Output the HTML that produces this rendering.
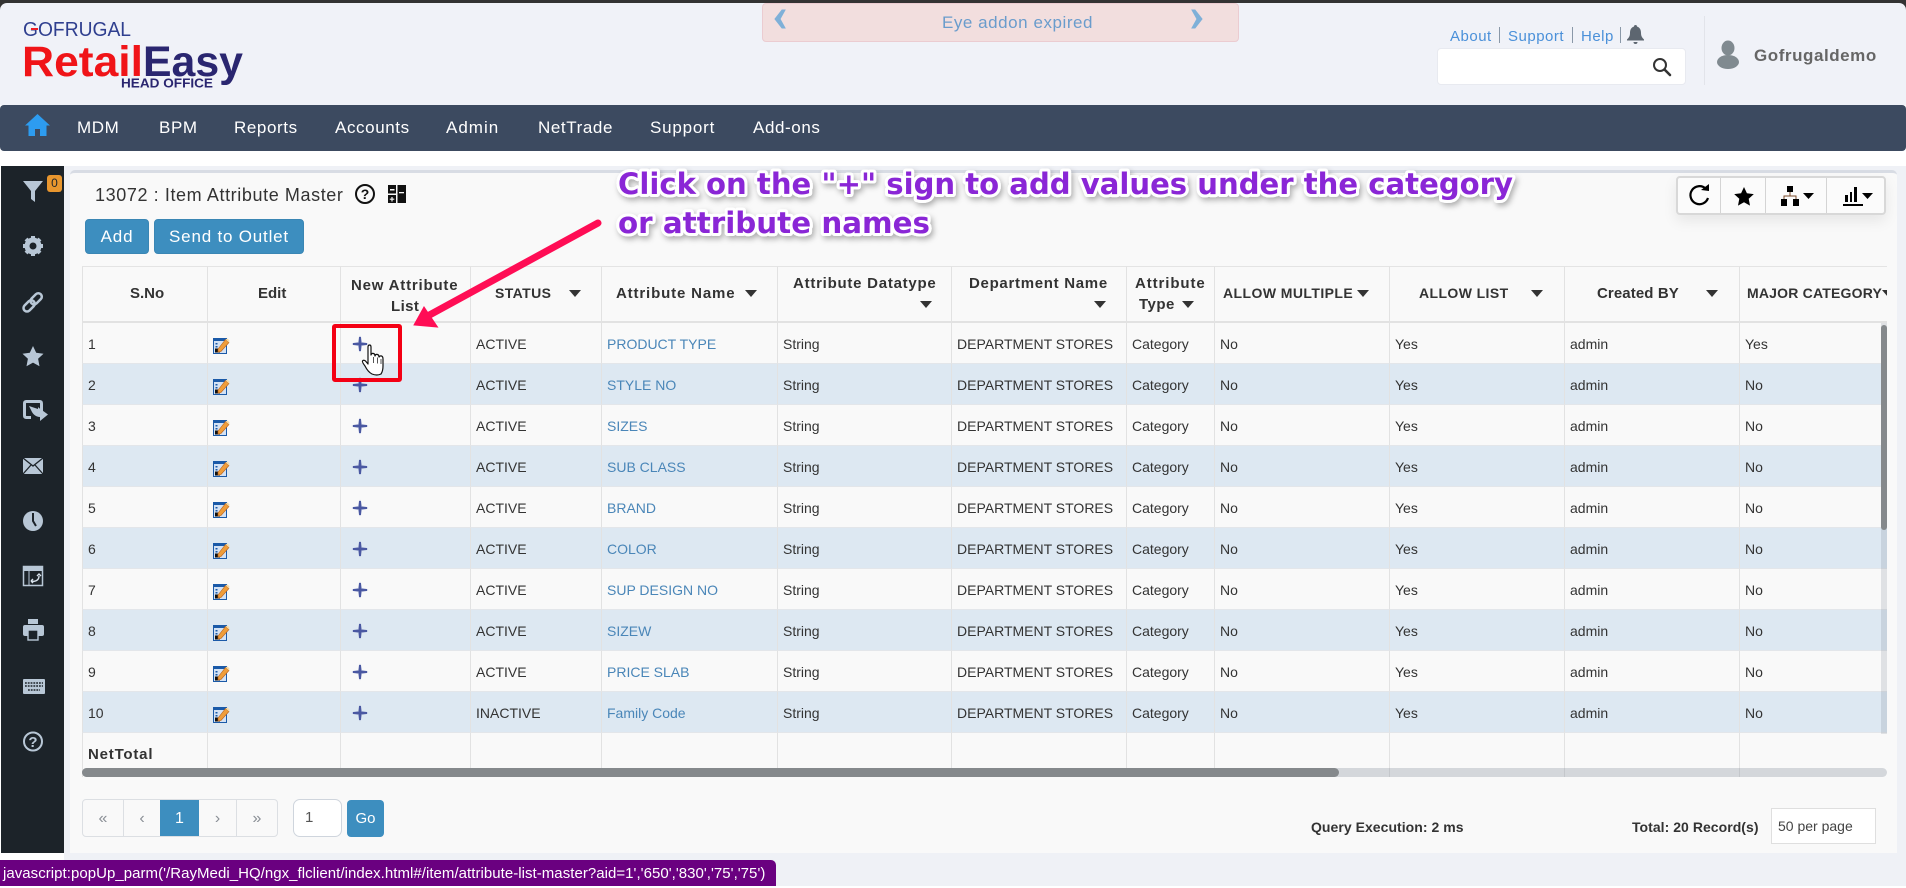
<!DOCTYPE html>
<html lang="en">
<head>
<meta charset="utf-8">
<title>13072 : Item Attribute Master</title>
<style>
*{box-sizing:border-box}
html,body{margin:0;padding:0;width:1906px;height:886px;overflow:hidden;background:#fff;font-family:"Liberation Sans",Arial,sans-serif;color:#333}
.a{position:absolute}
#strip{left:0;top:0;width:1906px;height:10px;background:#333}
#hdr{left:0;top:3px;width:1906px;height:102px;background:#f0f2f8;border-radius:7px 7px 0 0}
#alert{left:762px;top:3px;width:477px;height:39px;background:#f2dede;border:1px solid #ebccd1;border-radius:4px}
#alert span{position:absolute;left:0;right:0;top:9px;text-align:center;font-size:17px;letter-spacing:.55px;line-height:20px;color:#6a9ccc;padding-left:37px;padding-right:0;margin-left:-3px}
.tl{font-size:15px;letter-spacing:.5px;color:#4a90d9;top:28px;line-height:18px}
.sep{width:1px;height:16px;top:27px;background:#8a98a8}
#search{left:1437px;top:48px;width:249px;height:37px;background:#fff;border:1px solid #e8eaf0;border-radius:4px}
#udiv{left:1704px;top:16px;width:1px;height:69px;background:#e2e4ea}
#uname{left:1754px;top:46px;font-size:17px;font-weight:bold;letter-spacing:.55px;color:#666;line-height:20px}
#nav{left:0;top:105px;width:1906px;height:46px;background:#3c4a60;border-radius:4px}
.ni{top:12px;font-size:17px;letter-spacing:.6px;color:#fff;line-height:22px;white-space:nowrap}
#side{left:1px;top:166px;width:63px;height:687px;background:#1c2329}
#bg1{left:64px;top:166px;width:1842px;height:720px;background:#eff1f6}
#panel{left:70px;top:170px;width:1827px;height:683px;background:#f9f9f9;border-top:3px solid #d8dce4;border-radius:5px 5px 0 0}
#title{left:95px;top:184px;font-size:18px;letter-spacing:.6px;line-height:22px;color:#333;white-space:nowrap}
.btn{background:#3d8ebf;border:1px solid #3a86b4;border-radius:4px;color:#fff;font-size:17px;letter-spacing:.8px;line-height:33px;text-align:center;top:219px;height:35px}
#tools{left:1676px;top:176px;width:210px;height:39px;background:#fbfbfb;border:2px solid #d8d8d8;border-radius:4px;box-shadow:0 6px 14px rgba(0,0,0,.08)}
#tools i{position:absolute;top:0;bottom:0;width:1px;background:#d4d4d4}
#twrap{left:82px;top:266px;width:1805px;height:511px;overflow:hidden}
table{border-collapse:separate;border-spacing:0;table-layout:fixed;width:1805px;font-size:14px}
th,td{padding:0 0 0 5px;border-left:1px solid #e2e2e2;position:relative;text-align:left;white-space:nowrap;overflow:visible}
th{height:57px;border-top:1px solid #e4e4e4;border-bottom:2px solid #e2e2e2;font-weight:bold;color:#333;background:#f9f9f9}
th span{position:absolute;line-height:18px;white-space:nowrap}
th b{position:absolute;width:0;height:0;border-left:6px solid transparent;border-right:6px solid transparent;border-top:7px solid #333}
td{height:41px;border-bottom:1px solid #e3e6ea;vertical-align:middle;padding-top:2px}
tr.e td{background:#dde8f2}
tr.o td{background:#f9f9f9}
td.l{color:#4a86b8}
td svg{position:absolute}
tr.t td{height:44px;background:#f9f9f9;font-weight:bold;font-size:15px;letter-spacing:.8px;vertical-align:top;padding-top:13px;border-bottom:0}
#hbar{left:82px;top:768px;width:1805px;height:9px;background:rgba(120,130,145,.28);border-radius:5px}
#hthumb{left:82px;top:768px;width:1257px;height:9px;background:#85898c;border-radius:5px}
#vbar{left:1881px;top:323px;width:6px;height:411px;background:rgba(120,130,145,.2)}
#vthumb{left:1881px;top:325px;width:6px;height:205px;background:#85898c;border-radius:3px}
#pg{left:82px;top:799px;width:196px;height:38px;background:#f9f9f9;border:1px solid #dcdfe3;border-radius:4px}
#pg span{position:absolute;top:0;height:36px;line-height:38px;text-align:center;color:#8a8f96;font-size:16px}
#pg .act{background:#3d8ebf;color:#fff}
#pin{left:293px;top:799px;width:49px;height:38px;background:#fff;border:1px solid #cfd5dd;border-radius:7px;font-size:15px;line-height:36px;padding-left:11px;color:#555}
#go{left:347px;top:800px;width:37px;height:37px;background:#3d8ebf;border-radius:4px;color:#fff;font-size:15px;line-height:37px;text-align:center}
.ft{top:818px;font-size:14px;font-weight:bold;line-height:18px;color:#333;letter-spacing:.04px;white-space:nowrap}
#per{left:1771px;top:808px;width:105px;height:36px;background:#fff;border:1px solid #dfdfdf;font-size:14px;line-height:34px;padding-left:6px;color:#444}
#status{left:0;top:860px;width:776px;height:26px;background:#6a0080;border-radius:0 5px 0 0;color:#fff;font-size:15px;line-height:28px;padding-left:3px;white-space:nowrap;letter-spacing:.04px}
#overlay{left:0;top:0;width:1906px;height:886px;pointer-events:none}
</style>
</head>
<body>
<svg width="0" height="0" style="position:absolute">
<defs>
<symbol id="plus" viewBox="0 0 18 18">
<path d="M9 1L7.400 7.400 1 9 7.400 10.600 9 17 10.600 10.600 17 9 10.600 7.400Z" fill="#a4aed2" stroke="#a4aed2" stroke-width="1" opacity=".6"/>
<path d="M8 2h2l.4 5.600 5.600.4v2l-5.600.4L10 16H8l-.4-5.600L2 10V8l5.600-.4z" fill="#4a58a2"/>
</symbol>
<symbol id="edit" viewBox="0 0 17 17">
<rect x=".5" y="1.500" width="13" height="15" fill="#d4e2f4" stroke="#1b5aa8"/>
<rect x="1" y="2" width="12" height="2" fill="#1b5aa8"/>
<rect x="2.500" y="6" width="2" height="1.500" fill="#1b5aa8"/><rect x="2.500" y="9" width="2" height="1.500" fill="#1b5aa8"/>
<rect x="2" y="11.500" width="5" height="4" fill="#111"/>
<path d="M5 12L12.500 2.500 16 5.500 8 14.500 5 15Z" fill="#ef9d3a" stroke="#b9601a" stroke-width=".6"/>
<path d="M12.500 2.500L16 5.500 16.500 3.500 14.500 1.500Z" fill="#f7dca6"/>
</symbol>
</defs>
</svg>

<div class="a" id="strip"></div>
<div class="a" id="hdr"></div>

<svg class="a" style="left:0;top:0" width="270" height="100">
<text x="23" y="36" font-family="Liberation Sans" font-size="20" fill="#2f3f8f" textLength="108" lengthAdjust="spacingAndGlyphs">GOFRUGAL</text>
<rect x="31" y="28" width="7" height="2" fill="#ef1c24"/>
<text x="22" y="76" font-family="Liberation Sans" font-weight="bold" font-size="43" fill="#f01418" textLength="121" lengthAdjust="spacingAndGlyphs">Retail</text>
<text x="143" y="76" font-family="Liberation Sans" font-weight="bold" font-size="43" fill="#2a2670" textLength="100" lengthAdjust="spacingAndGlyphs">Easy</text>
<text x="121" y="87.500" font-family="Liberation Sans" font-weight="bold" font-size="13" fill="#2a2670" textLength="92" lengthAdjust="spacingAndGlyphs">HEAD OFFICE</text>
</svg>

<div class="a" id="alert"><span>Eye addon expired</span></div>
<svg class="a" style="left:770px;top:8px" width="20" height="22"><path d="M12 2L5 11l7 9h3L10 11l5-9z" fill="#7fb0d8" stroke="#7fb0d8"/></svg>
<svg class="a" style="left:1187px;top:8px" width="20" height="22"><path d="M8 2l7 9-7 9H5l5-9-5-9z" fill="#7fb0d8" stroke="#7fb0d8"/></svg>

<span class="a tl" style="left:1450px">About</span><div class="a sep" style="left:1499px"></div>
<span class="a tl" style="left:1508px">Support</span><div class="a sep" style="left:1572px"></div>
<span class="a tl" style="left:1581px">Help</span><div class="a sep" style="left:1620px"></div>
<svg class="a" style="left:1626px;top:24px" width="19" height="21"><path d="M9.500 1c1.200 0 1.500.8 1.500 1.500C14 3.500 15 6 15 9c0 3 1 4.500 3 6.500v1H1v-1C3 13.500 4 12 4 9c0-3 1-5.500 4-6.500C8 1.800 8.300 1 9.500 1z" fill="#5d6670"/><path d="M7.500 18a2 2 0 0 0 4 0z" fill="#5d6670"/></svg>
<div class="a" id="search"></div>
<svg class="a" style="left:1652px;top:57px" width="20" height="20"><circle cx="8" cy="8" r="6" fill="none" stroke="#333" stroke-width="2"/><path d="M12.500 12.500L18 18" stroke="#333" stroke-width="2.600" stroke-linecap="round"/></svg>
<div class="a" id="udiv"></div>
<svg class="a" style="left:1716px;top:40px" width="24" height="30"><ellipse cx="12" cy="8" rx="6.500" ry="7.500" fill="#808a90"/><ellipse cx="12" cy="22" rx="11" ry="7" fill="#808a90"/></svg>
<span class="a" id="uname">Gofrugaldemo</span>

<div class="a" id="nav">
<svg class="a" style="left:24px;top:8px" width="27" height="24"><path d="M13.500 1L1 12.500h3.500V23h6.500v-7h5v7h6.500V12.500H26z" fill="#2d9cf0"/></svg>
<span class="a ni" style="left:77px">MDM</span>
<span class="a ni" style="left:159px">BPM</span>
<span class="a ni" style="left:234px">Reports</span>
<span class="a ni" style="left:335px">Accounts</span>
<span class="a ni" style="left:446px;letter-spacing:1px">Admin</span>
<span class="a ni" style="left:538px">NetTrade</span>
<span class="a ni" style="left:650px;letter-spacing:.8px">Support</span>
<span class="a ni" style="left:753px">Add-ons</span>
</div>

<div class="a" id="bg1"></div>
<div class="a" id="side"></div>
<div class="a" id="panel"></div>

<svg class="a" style="left:0;top:166px" width="64" height="687">
<g fill="#b8c7d6">
<path d="M23 15h20l-8 10v11l-4 -3v-8z"/>
<circle cx="33" cy="80" r="6" fill="none" stroke="#b8c7d6" stroke-width="5"/>
<g stroke="#b8c7d6" stroke-width="4"><path d="M33 70v3M33 87v3M23 80h3M40 80h3M26 73l2 2M38 85l2 2M26 87l2-2M38 75l2-2"/></g>
<g fill="none" stroke="#b8c7d6" stroke-width="2.500" transform="rotate(-45 33 136)"><rect x="21" y="132.500" width="13" height="7" rx="3.500"/><rect x="31" y="132.500" width="13" height="7" rx="3.500"/></g>
<path d="M33 180l3.200 6.800 7.300.9-5.400 5.100 1.400 7.400-6.500-3.600-6.500 3.600 1.400-7.400-5.400-5.100 7.300-.9z"/>
<g transform="translate(0 -23)">
<path d="M27 257c-3 0-4 1-4 4v11c0 3 1 4 4 4h4v-3h-4c-1 0-1 0-1-1v-11c0-1 0-1 1-1h12c1 0 1 0 1 1v7h3v-7c0-3-1-4-4-4z"/>
<path d="M29 263l9 3v-2l1 1 9 6.500-8 6.500v-4c-4 0-7-3-8-5z"/>
</g>
<rect x="23" y="292" width="20" height="16"/>
<path d="M23 292l10 8 10-8M23 308l8-9M43 308l-8-9" fill="none" stroke="#1c2329" stroke-width="1.300"/>
<circle cx="33" cy="355" r="10"/>
<path d="M33 347v8l3 5" fill="none" stroke="#1c2329" stroke-width="2"/>
<rect x="23.500" y="400.500" width="19" height="19" fill="none" stroke="#b8c7d6" stroke-width="1.500"/>
<rect x="24" y="401" width="18" height="4"/>
<path d="M29 405v14" stroke="#b8c7d6"/>
<path d="M31 415c3 1 8 0 8-5M37 410l2-2 2 2M31 415l2-2M31 415l2 2" fill="none" stroke="#d8e2ec" stroke-width="1.400"/>
<rect x="28" y="453" width="10" height="5"/>
<rect x="23" y="459" width="21" height="11" rx="2"/>
<rect x="28" y="464" width="10" height="10" fill="#1c2329" stroke="#b8c7d6" stroke-width="1.400"/>
<rect x="23" y="513" width="22" height="15" rx="1"/>
<path d="M25 517h18M25 520h18M28 524h12" stroke="#1c2329" stroke-width="1.500" stroke-dasharray="1.800 1"/>
<circle cx="33" cy="575.500" r="9" fill="none" stroke="#b8c7d6" stroke-width="2"/>
</g>
<text x="33" y="581" text-anchor="middle" font-family="Liberation Sans" font-weight="bold" font-size="15" fill="#b8c7d6">?</text>
</svg>
<div class="a" style="left:47px;top:175px;width:15px;height:17px;background:#e8962e;border-radius:3px;color:#1c2329;font-size:12px;line-height:16px;text-align:center">0</div>

<div class="a" id="title">13072 : Item Attribute Master</div>
<svg class="a" style="left:354px;top:183px" width="22" height="22"><circle cx="11" cy="11" r="9" fill="none" stroke="#111" stroke-width="2"/><text x="11" y="16" text-anchor="middle" font-family="Liberation Sans" font-weight="bold" font-size="14" fill="#111">?</text></svg>
<svg class="a" style="left:388px;top:185px" width="18" height="18"><rect width="18" height="18" fill="#111"/><rect x="8" y="0" width="1.500" height="18" fill="#f9f9f9"/><rect x="2" y="4" width="4.500" height="1.500" fill="#f9f9f9"/><rect x="11" y="7" width="5" height="1.300" fill="#f9f9f9"/><rect x="0" y="8.500" width="8" height="1.500" fill="#f9f9f9"/><path d="M4 12v4.500M1.800 14.200h4.500" stroke="#f9f9f9" stroke-width="1.200"/></svg>

<div class="a btn" style="left:85px;width:64px">Add</div>
<div class="a btn" style="left:154px;width:150px">Send to Outlet</div>

<div class="a" id="tools"><i style="left:42px"></i><i style="left:87px"></i><i style="left:148px"></i></div>
<svg class="a" style="left:1676px;top:176px" width="210" height="39">
<path d="M29.500 12.500a9 9 0 1 0 2.500 9.500" fill="none" stroke="#000" stroke-width="2.200"/><path d="M25 14l8-6v7z" fill="#000"/>
<path d="M68 11l2.900 6.300 6.900.8-5.100 4.700 1.300 6.800-6-3.400-6 3.400 1.300-6.800-5.100-4.700 6.900-.8z" fill="#000"/>
<rect x="111" y="10" width="6" height="6" fill="#000"/><rect x="105" y="23" width="6" height="7" fill="#000"/><rect x="117" y="23" width="6" height="7" fill="#000"/><path d="M114 16v4M108 23v-3h12v3" fill="none" stroke="#7a4a2a" stroke-width="1"/>
<path d="M127 17h11l-5.500 6z" fill="#000"/>
<rect x="169" y="19" width="3" height="7" fill="#000"/><rect x="174" y="16" width="2" height="10" fill="#000"/><rect x="178" y="11" width="3" height="15" fill="#000"/><rect x="167" y="28" width="20" height="2" fill="#000"/>
<path d="M186 17h11l-5.500 6z" fill="#000"/>
</svg>

<div class="a" id="twrap">
<table>
<colgroup><col style="width:125px"><col style="width:133px"><col style="width:130px"><col style="width:131px"><col style="width:176px"><col style="width:174px"><col style="width:175px"><col style="width:88px"><col style="width:175px"><col style="width:175px"><col style="width:175px"><col style="width:148px"></colgroup>
<thead><tr>
<th><span style="left:47px;top:18px;font-size:15px">S.No</span></th>
<th><span style="left:50px;top:18px;font-size:15px">Edit</span></th>
<th><span style="left:10px;top:10px;font-size:15px;letter-spacing:.8px">New Attribute</span><span style="left:50px;top:31px;font-size:15px;letter-spacing:.4px">List</span></th>
<th><span style="left:24px;top:17px;letter-spacing:.4px">STATUS</span><b style="left:98px;top:23px"></b></th>
<th><span style="left:14px;top:18px;font-size:15px;letter-spacing:.85px">Attribute Name</span><b style="left:143px;top:23px"></b></th>
<th><span style="left:15px;top:8px;font-size:15px;letter-spacing:.75px">Attribute Datatype</span><b style="left:142px;top:34px"></b></th>
<th><span style="left:17px;top:8px;font-size:15px;letter-spacing:.7px">Department Name</span><b style="left:142px;top:34px"></b></th>
<th><span style="left:8px;top:8px;font-size:15px;letter-spacing:.9px">Attribute</span><span style="left:12px;top:29px;font-size:15px;letter-spacing:.5px">Type</span><b style="left:55px;top:34px"></b></th>
<th><span style="left:8px;top:17px;letter-spacing:.43px">ALLOW MULTIPLE</span><b style="left:142px;top:23px"></b></th>
<th><span style="left:29px;top:17px;letter-spacing:.4px">ALLOW LIST</span><b style="left:141px;top:23px"></b></th>
<th><span style="left:32px;top:18px;font-size:15px;letter-spacing:.1px">Created BY</span><b style="left:141px;top:23px"></b></th>
<th><span style="left:7px;top:17px;letter-spacing:.2px">MAJOR CATEGORY</span><b style="left:142px;top:23px"></b></th>
</tr></thead>
<tbody>
<tr class="o"><td>1</td><td><svg width="17" height="17" style="left:5px;top:14px"><use href="#edit"/></svg></td><td><svg width="18" height="18" style="left:10px;top:12px"><use href="#plus"/></svg></td><td>ACTIVE</td><td class="l">PRODUCT TYPE</td><td>String</td><td>DEPARTMENT STORES</td><td>Category</td><td>No</td><td>Yes</td><td>admin</td><td>Yes</td></tr>
<tr class="e"><td>2</td><td><svg width="17" height="17" style="left:5px;top:14px"><use href="#edit"/></svg></td><td><svg width="18" height="18" style="left:10px;top:12px"><use href="#plus"/></svg></td><td>ACTIVE</td><td class="l">STYLE NO</td><td>String</td><td>DEPARTMENT STORES</td><td>Category</td><td>No</td><td>Yes</td><td>admin</td><td>No</td></tr>
<tr class="o"><td>3</td><td><svg width="17" height="17" style="left:5px;top:14px"><use href="#edit"/></svg></td><td><svg width="18" height="18" style="left:10px;top:12px"><use href="#plus"/></svg></td><td>ACTIVE</td><td class="l">SIZES</td><td>String</td><td>DEPARTMENT STORES</td><td>Category</td><td>No</td><td>Yes</td><td>admin</td><td>No</td></tr>
<tr class="e"><td>4</td><td><svg width="17" height="17" style="left:5px;top:14px"><use href="#edit"/></svg></td><td><svg width="18" height="18" style="left:10px;top:12px"><use href="#plus"/></svg></td><td>ACTIVE</td><td class="l">SUB CLASS</td><td>String</td><td>DEPARTMENT STORES</td><td>Category</td><td>No</td><td>Yes</td><td>admin</td><td>No</td></tr>
<tr class="o"><td>5</td><td><svg width="17" height="17" style="left:5px;top:14px"><use href="#edit"/></svg></td><td><svg width="18" height="18" style="left:10px;top:12px"><use href="#plus"/></svg></td><td>ACTIVE</td><td class="l">BRAND</td><td>String</td><td>DEPARTMENT STORES</td><td>Category</td><td>No</td><td>Yes</td><td>admin</td><td>No</td></tr>
<tr class="e"><td>6</td><td><svg width="17" height="17" style="left:5px;top:14px"><use href="#edit"/></svg></td><td><svg width="18" height="18" style="left:10px;top:12px"><use href="#plus"/></svg></td><td>ACTIVE</td><td class="l">COLOR</td><td>String</td><td>DEPARTMENT STORES</td><td>Category</td><td>No</td><td>Yes</td><td>admin</td><td>No</td></tr>
<tr class="o"><td>7</td><td><svg width="17" height="17" style="left:5px;top:14px"><use href="#edit"/></svg></td><td><svg width="18" height="18" style="left:10px;top:12px"><use href="#plus"/></svg></td><td>ACTIVE</td><td class="l">SUP DESIGN NO</td><td>String</td><td>DEPARTMENT STORES</td><td>Category</td><td>No</td><td>Yes</td><td>admin</td><td>No</td></tr>
<tr class="e"><td>8</td><td><svg width="17" height="17" style="left:5px;top:14px"><use href="#edit"/></svg></td><td><svg width="18" height="18" style="left:10px;top:12px"><use href="#plus"/></svg></td><td>ACTIVE</td><td class="l">SIZEW</td><td>String</td><td>DEPARTMENT STORES</td><td>Category</td><td>No</td><td>Yes</td><td>admin</td><td>No</td></tr>
<tr class="o"><td>9</td><td><svg width="17" height="17" style="left:5px;top:14px"><use href="#edit"/></svg></td><td><svg width="18" height="18" style="left:10px;top:12px"><use href="#plus"/></svg></td><td>ACTIVE</td><td class="l">PRICE SLAB</td><td>String</td><td>DEPARTMENT STORES</td><td>Category</td><td>No</td><td>Yes</td><td>admin</td><td>No</td></tr>
<tr class="e"><td>10</td><td><svg width="17" height="17" style="left:5px;top:14px"><use href="#edit"/></svg></td><td><svg width="18" height="18" style="left:10px;top:12px"><use href="#plus"/></svg></td><td>INACTIVE</td><td class="l">Family Code</td><td>String</td><td>DEPARTMENT STORES</td><td>Category</td><td>No</td><td>Yes</td><td>admin</td><td>No</td></tr>
<tr class="t"><td>NetTotal</td><td></td><td></td><td></td><td></td><td></td><td></td><td></td><td></td><td></td><td></td><td></td></tr>
</tbody>
</table>
</div>
<div class="a" id="vbar"></div><div class="a" id="vthumb"></div>
<div class="a" id="hbar"></div><div class="a" id="hthumb"></div>

<div class="a" id="pg">
<span style="left:0;width:40px">«</span>
<span style="left:40px;width:1px;background:#dcdfe3"></span>
<span style="left:41px;width:36px">‹</span>
<span class="act" style="left:77px;width:39px">1</span>
<span style="left:116px;width:37px">›</span>
<span style="left:153px;width:1px;background:#dcdfe3"></span>
<span style="left:154px;width:40px">»</span>
</div>
<div class="a" id="pin">1</div>
<div class="a" id="go">Go</div>

<div class="a ft" style="left:1311px">Query Execution: 2 ms</div>
<div class="a ft" style="left:1632px">Total: 20 Record(s)</div>
<div class="a" id="per">50 per page</div>

<div class="a" id="status">javascript:popUp_parm('/RayMedi_HQ/ngx_flclient/index.html#/item/attribute-list-master?aid=1','650','830','75','75')</div>

<svg class="a" id="overlay" width="1906" height="886">
<defs><filter id="sh" x="-5%" y="-30%" width="110%" height="170%"><feDropShadow dx="2" dy="3" stdDeviation="3" flood-color="#000" flood-opacity=".3"/></filter></defs>
<g font-family="DejaVu Sans" font-weight="bold" font-size="29" fill="#8a25d6" stroke="#fff" stroke-width="6" stroke-linejoin="round" paint-order="stroke" filter="url(#sh)">
<text x="618" y="194" textLength="895" lengthAdjust="spacingAndGlyphs">Click on the "+" sign to add values under the category</text>
<text x="618" y="233" textLength="312" lengthAdjust="spacingAndGlyphs">or attribute names</text>
</g>
<path d="M598 223L424 318" stroke="#ff0d55" stroke-width="7" stroke-linecap="round"/>
<path d="M414 325L424 307 437.500 327Z" fill="#ff0d55" stroke="#ff0d55" stroke-width="1"/>
<rect x="334" y="326" width="66" height="54" fill="none" stroke="#f40014" stroke-width="4" rx="1"/>
<g transform="translate(362 345)">
<path d="M6 2Q6 0 7.500 0Q9 0 9 2V10Q9.500 8 11.500 8.500Q13 9 13 11Q13.500 9 15.500 9.500Q17 10 17 12Q18 10.500 19.500 11Q21 11.500 21 14V21Q21 26 19 29Q15 31 10 29Q6 27 3 21Q0 17 .5 16Q1.500 14.500 3.500 16L6 19Z" fill="#fff" stroke="#111" stroke-width="1.200" stroke-linejoin="round"/>
<path d="M11.500 12v6M15.500 12.500v6M19 14v5" stroke="#555" stroke-width="1"/>
</g>
</svg>
</body>
</html>
